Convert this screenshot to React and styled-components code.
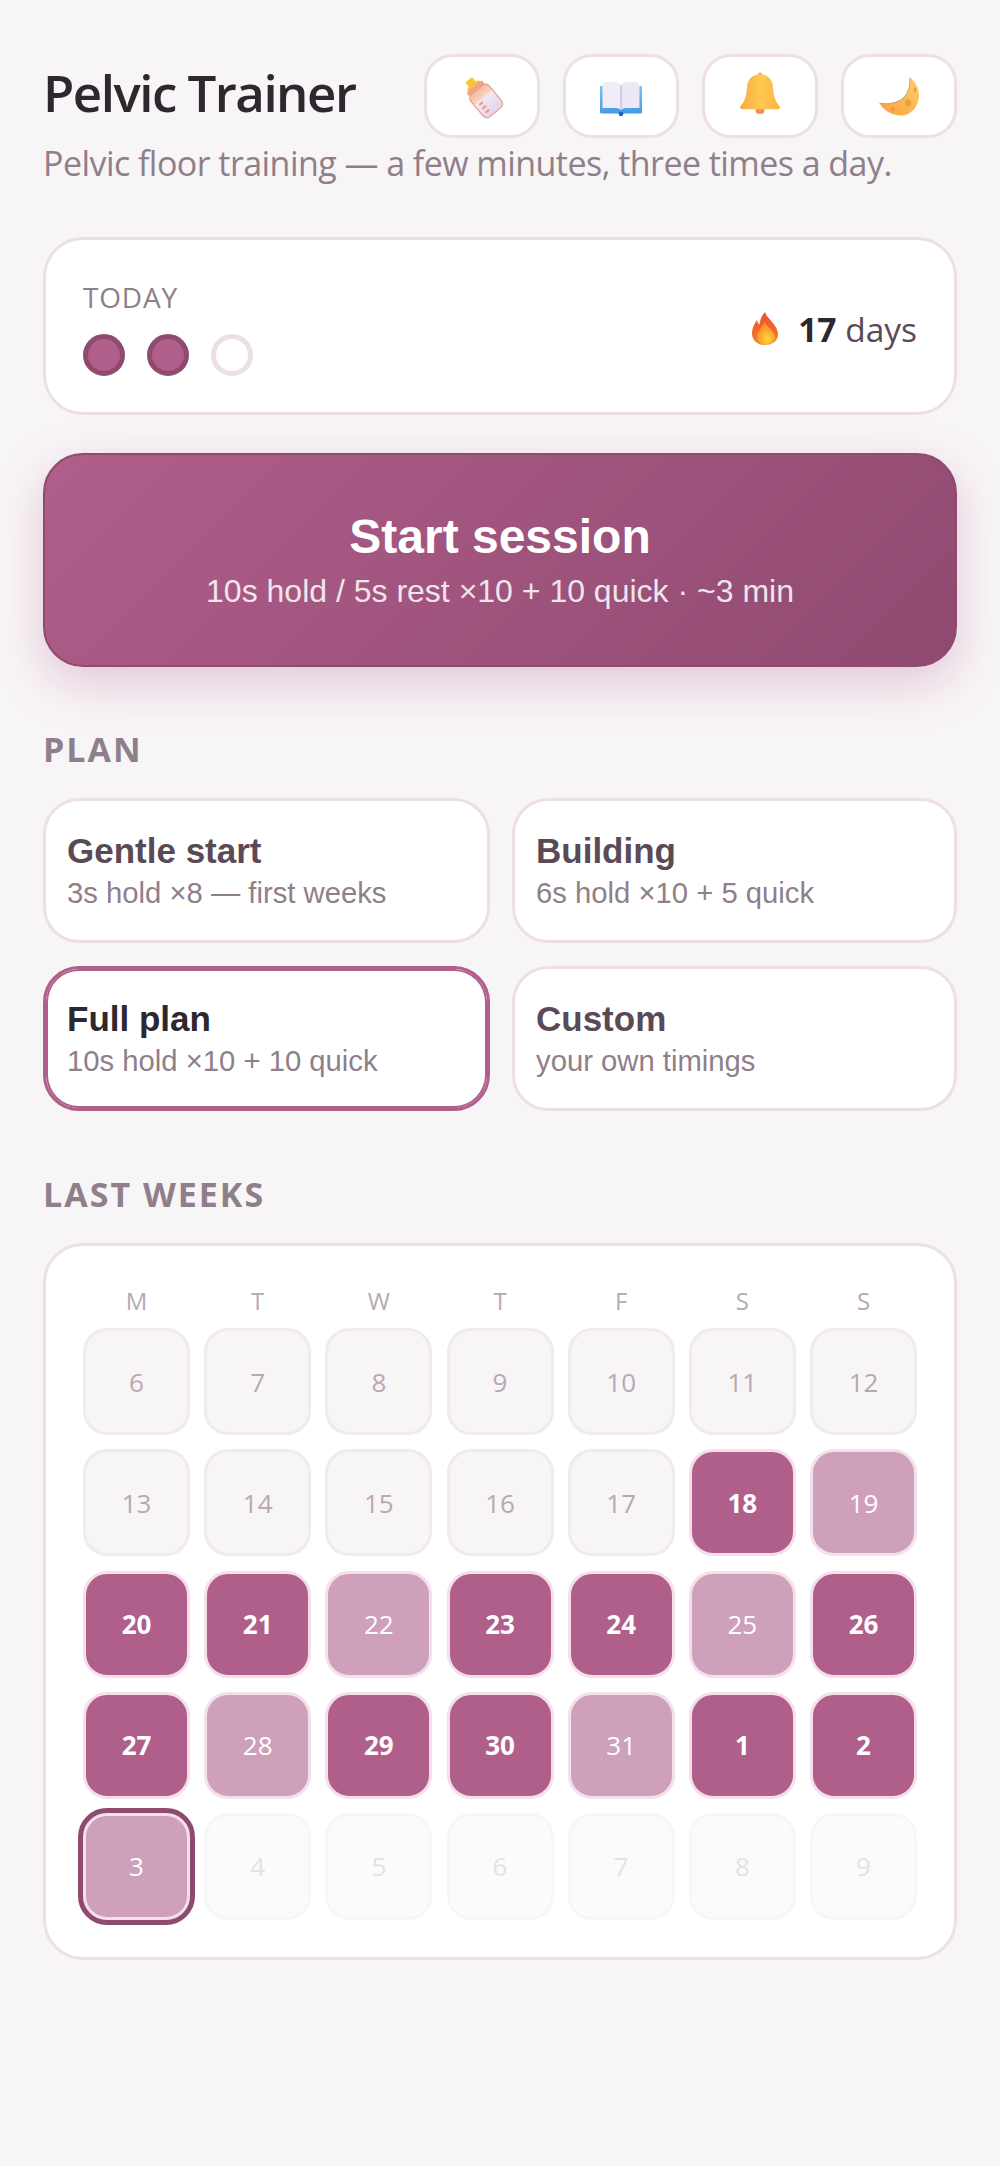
import styled, { createGlobalStyle } from "styled-components";

const GlobalStyle = createGlobalStyle`
  html, body {
    margin: 0;
    padding: 0;
    background: #f8f5f7;
  }
  * {
    box-sizing: border-box;
  }
`;

const Page = styled.div`
  width: 1000px;
  min-height: 2166px;
  padding: 54px 43px 0;
  background: #f8f5f7;
  font-family: "Open Sans", "Noto Sans", sans-serif;
  color: #2d2730;
`;

const Header = styled.header`
  display: flex;
  align-items: center;
  justify-content: space-between;
`;

const Title = styled.h1`
  margin: 0 0 8px 0;
  font-size: 51px;
  line-height: 76px;
  font-weight: 600;
  letter-spacing: -1.5px;
  color: #2d2730;
`;

const IconRow = styled.div`
  display: flex;
  gap: 23px;
`;

const IconButton = styled.button`
  width: 116px;
  height: 84px;
  padding: 0;
  display: flex;
  align-items: center;
  justify-content: center;
  background: #fff;
  border: 3px solid #ecdfe7;
  border-radius: 29px;
`;

const Subtitle = styled.p`
  margin: 0;
  font-size: 34px;
  line-height: 50px;
  color: #8f7f8a;
  white-space: nowrap;
  letter-spacing: -0.55px;
`;

const TodayCard = styled.section`
  margin-top: 49px;
  height: 178px;
  padding: 0 37px;
  display: flex;
  align-items: center;
  justify-content: space-between;
  background: #fff;
  border: 3px solid #ecdfe7;
  border-radius: 40px;
`;

const TodayBlock = styled.div`
  padding-top: 2px;
`;

const TodayLabel = styled.div`
  font-size: 28px;
  line-height: 38px;
  letter-spacing: 0.8px;
  color: #8f7f8a;
`;

const Dots = styled.div`
  margin-top: 18px;
  display: flex;
  gap: 22px;
`;

const Dot = styled.span`
  width: 42px;
  height: 42px;
  border-radius: 50%;
  border: 5px solid ${(p) => (p.$done ? "#8f4a70" : "#ecdfe7")};
  background: ${(p) => (p.$done ? "#b05e8a" : "#fff")};
`;

const Streak = styled.div`
  display: flex;
  align-items: center;
  gap: 20px;
  padding-top: 5px;
  font-size: 33.5px;
  line-height: 48px;
  color: #5a4a55;
`;

const StreakText = styled.span`
  b {
    font-weight: 700;
    color: #2d2730;
  }
`;

const StartButton = styled.button`
  display: block;
  width: 100%;
  height: 214px;
  margin-top: 38px;
  padding: 0 0 2px;
  border: 2px solid #8f4a70;
  border-radius: 40px;
  background: linear-gradient(135deg, #b05e8a, #8f4a70);
  box-shadow: 0 16px 48px rgba(176, 94, 138, 0.3);
  font-family: "Liberation Sans", Arial, sans-serif;
  color: #fff;
  text-align: center;
`;

const StartTitle = styled.div`
  font-size: 48px;
  line-height: 58px;
  font-weight: 700;
`;

const StartSub = styled.div`
  margin-top: 5px;
  font-size: 32px;
  line-height: 40px;
  opacity: 0.85;
`;

const SectionLabel = styled.h2`
  margin: ${(p) => p.$top}px 0 0;
  font-size: 34px;
  line-height: 46px;
  font-weight: 700;
  letter-spacing: 2px;
  color: #8f7f8a;
`;

const PlanGrid = styled.div`
  margin-top: 26px;
  display: grid;
  grid-template-columns: 447px 445px;
  gap: 23px 22px;
`;

const PlanCard = styled.div`
  height: 145px;
  padding: 0 21px;
  display: flex;
  flex-direction: column;
  justify-content: center;
  background: #fff;
  border: 3px solid ${(p) => (p.$active ? "#b05e8a" : "#ecdfe7")};
  border-radius: 36px;
  box-shadow: ${(p) => (p.$active ? "inset 0 0 0 2px #b05e8a" : "none")};
  font-family: "Liberation Sans", Arial, sans-serif;
`;

const PlanTitle = styled.div`
  font-size: 35px;
  line-height: 44px;
  font-weight: 700;
  color: ${(p) => (p.$active ? "#2d2730" : "#5a4a55")};
`;

const PlanSub = styled.div`
  margin-top: 1px;
  font-size: 29.25px;
  line-height: 38px;
  color: #8f7f8a;
`;

const CalendarCard = styled.section`
  margin-top: 26px;
  padding: 36px 37px 37px;
  background: #fff;
  border: 3px solid #ecdfe7;
  border-radius: 40px;
`;

const CalendarGrid = styled.div`
  display: grid;
  grid-template-columns: repeat(7, 1fr);
  gap: 14.2px;
`;

const WeekDay = styled.div`
  height: 32px;
  padding-top: 3px;
  font-size: 24px;
  line-height: 32px;
  text-align: center;
  color: #b8a8b2;
`;

const cellBg = { none: "#f8f5f7", full: "#b05e8a", part: "#cfa0b9", future: "#fcfbfc" };
const cellColor = { none: "#b8a8b2", full: "#fff", part: "#fff", future: "#e6e1e4" };
const cellBorder = { none: "#f1eaee", full: "#f4dfec", part: "#f4dfec", future: "#f9f6f8" };

const Cell = styled.div`
  aspect-ratio: 1;
  display: flex;
  align-items: center;
  justify-content: center;
  background: ${(p) => cellBg[p.$kind]};
  border: 3px solid ${(p) => cellBorder[p.$kind]};
  border-radius: 24px;
  font-size: 26px;
  font-weight: ${(p) => (p.$kind === "full" ? 700 : 400)};
  color: ${(p) => cellColor[p.$kind]};
  outline: ${(p) => (p.$today ? "5px solid #8f4a70" : "none")};
`;

const BottleIcon = () => (
  <svg width="44" height="46" viewBox="0 0 44 46">
    <defs>
      <linearGradient id="bottleTop" x1="0" y1="0" x2="0" y2="1">
        <stop offset="0" stopColor="#f6b9a0" />
        <stop offset="1" stopColor="#f9d8c8" />
      </linearGradient>
      <linearGradient id="bottleLow" x1="0" y1="0" x2="0" y2="1">
        <stop offset="0" stopColor="#f3e9f5" />
        <stop offset="1" stopColor="#e2d3ea" />
      </linearGradient>
    </defs>
    <g transform="rotate(-40 22 23)">
      <path d="M19 2c-.6 0-1 .5-1 1l-.4 4.500c-2.200.5-3.600 1.600-3.600 3.500h16c0-1.900-1.400-3-3.600-3.500L26.500 3c0-.5-.4-1-1-1z" fill="#f5c53c" />
      <rect x="12" y="10.500" width="20" height="5" rx="2" fill="#f2a488" />
      <path d="M10 20a5 5 0 0 1 5-5h14a5 5 0 0 1 5 5v6H10z" fill="url(#bottleTop)" />
      <path d="M10 25h24v14a5 5 0 0 1-5 5H15a5 5 0 0 1-5-5z" fill="url(#bottleLow)" />
      <path d="M10 20a5 5 0 0 1 5-5h14a5 5 0 0 1 5 5v19a5 5 0 0 1-5 5H15a5 5 0 0 1-5-5z" fill="none" stroke="#ef9c8a" strokeWidth="1.200" />
      <g fill="#ee9a80">
        <rect x="14" y="27" width="5" height="2.200" rx="1.100" />
        <rect x="14" y="32" width="5" height="2.200" rx="1.100" />
        <rect x="14" y="37" width="5" height="2.200" rx="1.100" />
      </g>
    </g>
  </svg>
);

const BookIcon = () => (
  <svg width="44" height="42" viewBox="0 -6 44 42">
    <defs>
      <linearGradient id="bookCover" x1="0" y1="0" x2="0" y2="1">
        <stop offset="0" stopColor="#7cc4ec" />
        <stop offset="1" stopColor="#3f97e8" />
      </linearGradient>
    </defs>
    <path d="M1 5h42v26a1.500 1.500 0 0 1-1.500 1.500H26c-1 0-2 .5-2.500 1.500h-3c-.5-1-1.500-1.500-2.500-1.500H2.500A1.500 1.500 0 0 1 1 31z" fill="url(#bookCover)" />
    <circle cx="22" cy="33" r="2.200" fill="#1c62c4" />
    <path d="M3.500 3.500C4 2 6 1 9 1h7c3 0 5 1.500 5.500 3.500v24c-1-1-3-1.500-5.500-1.500H3.500z" fill="#f1edf8" />
    <path d="M40.500 3.500C40 2 38 1 35 1h-7c-3 0-5 1.500-5.500 3.500v24c1-1 3-1.500 5.500-1.500h12.500z" fill="#ede8f6" />
    <path d="M22 4v25" stroke="#d6cbe6" strokeWidth="2" />
  </svg>
);

const BellIcon = () => (
  <svg width="42" height="48" viewBox="0 0 42 48">
    <defs>
      <linearGradient id="bellBody" x1="0" y1="0" x2="1" y2="0">
        <stop offset="0" stopColor="#f9ac3e" />
        <stop offset="0.55" stopColor="#ffc952" />
        <stop offset="1" stopColor="#fbb240" />
      </linearGradient>
    </defs>
    <ellipse cx="21" cy="38.500" rx="4.500" ry="3.500" fill="#f28f5a" />
    <circle cx="21" cy="2.800" r="2.400" fill="#f9b644" />
    <path d="M21 2.500c-8 0-12.500 5-13 13-.4 7-1.500 13-6 18-1 1.500-1.500 3 .5 3.500.5.200 1 .2 1.500.2h34c.5 0 1 0 1.500-.2 2-.5 1.500-2 .5-3.500-4.500-5-5.600-11-6-18-.5-8-5-13-13-13z" fill="url(#bellBody)" />
  </svg>
);

const MoonIcon = () => (
  <svg width="41" height="39" viewBox="0 0 41 39">
    <defs>
      <linearGradient id="moonBody" x1="0" y1="1" x2="1" y2="0">
        <stop offset="0" stopColor="#f7a03f" />
        <stop offset="1" stopColor="#ffd06a" />
      </linearGradient>
    </defs>
    <path d="M30.700.7C31.500 9 29 17 23.300 21.700 17 26.500 8 27.500.5 26 4 33 13 38.500 22 38.500c11 0 18.500-10.500 18-21.500C39.500 10 36 4 30.700.7z" fill="url(#moonBody)" />
    <path d="M30.700.7C31.500 9 29 17 23.300 21.700 17 26.500 8 27.500.5 26" fill="none" stroke="#b98a4a" strokeWidth="0.700" />
    <g fill="#e8943c" opacity="0.75">
      <ellipse cx="29" cy="26" rx="3" ry="3.600" />
      <ellipse cx="14" cy="32" rx="2.400" ry="2" />
      <ellipse cx="36" cy="13" rx="1.400" ry="2.400" />
    </g>
  </svg>
);

const FlameIcon = () => (
  <svg width="26" height="33" viewBox="0 0 26 33">
    <defs>
      <linearGradient id="flameOuter" x1="0" y1="0" x2="0" y2="1">
        <stop offset="0" stopColor="#ee4f2e" />
        <stop offset="1" stopColor="#f67c2a" />
      </linearGradient>
      <radialGradient id="flameInner" cx="0.55" cy="0.72" r="0.62">
        <stop offset="0" stopColor="#ffd83c" />
        <stop offset="1" stopColor="#fb8a22" />
      </radialGradient>
    </defs>
    <path d="M13 0c1 4 4 6 7 10 3.500 4 6 8 6 12 0 7-6 11-13 11S0 28.500 0 21.500C0 16 2.500 12 5 8c.5 2 1 3.500 2.500 4.500C8 8 10 3 13 0z" fill="url(#flameOuter)" />
    <path d="M14 33c-5.500 0-9-3.500-9-8.500 0-5 4.500-9 7.500-14.500 2 4 8.500 8.500 10.500 13 1.500 5.500-3 10-9 10z" fill="url(#flameInner)" />
  </svg>
);

const weeks = [
  [["6"], ["7"], ["8"], ["9"], ["10"], ["11"], ["12"]],
  [["13"], ["14"], ["15"], ["16"], ["17"], ["18", "full"], ["19", "part"]],
  [["20", "full"], ["21", "full"], ["22", "part"], ["23", "full"], ["24", "full"], ["25", "part"], ["26", "full"]],
  [["27", "full"], ["28", "part"], ["29", "full"], ["30", "full"], ["31", "part"], ["1", "full"], ["2", "full"]],
  [["3", "part", true], ["4", "future"], ["5", "future"], ["6", "future"], ["7", "future"], ["8", "future"], ["9", "future"]],
];

const plans = [
  { name: "Gentle start", info: "3s hold ×8 — first weeks" },
  { name: "Building", info: "6s hold ×10 + 5 quick" },
  { name: "Full plan", info: "10s hold ×10 + 10 quick", active: true },
  { name: "Custom", info: "your own timings" },
];

const App = () => {
  return (
    <Page>
      <GlobalStyle />
      <Header>
        <Title>Pelvic Trainer</Title>
        <IconRow>
          <IconButton><BottleIcon /></IconButton>
          <IconButton><BookIcon /></IconButton>
          <IconButton><BellIcon /></IconButton>
          <IconButton><MoonIcon /></IconButton>
        </IconRow>
      </Header>
      <Subtitle>Pelvic floor training — a few minutes, three times a day.</Subtitle>

      <TodayCard>
        <TodayBlock>
          <TodayLabel>TODAY</TodayLabel>
          <Dots>
            <Dot $done />
            <Dot $done />
            <Dot />
          </Dots>
        </TodayBlock>
        <Streak>
          <FlameIcon />
          <StreakText><b>17</b> days</StreakText>
        </Streak>
      </TodayCard>

      <StartButton>
        <StartTitle>Start session</StartTitle>
        <StartSub>10s hold / 5s rest ×10 + 10 quick · ~3 min</StartSub>
      </StartButton>

      <SectionLabel $top={59}>PLAN</SectionLabel>
      <PlanGrid>
        {plans.map((plan) => (
          <PlanCard key={plan.name} $active={plan.active}>
            <PlanTitle $active={plan.active}>{plan.name}</PlanTitle>
            <PlanSub>{plan.info}</PlanSub>
          </PlanCard>
        ))}
      </PlanGrid>

      <SectionLabel $top={60}>LAST WEEKS</SectionLabel>
      <CalendarCard>
        <CalendarGrid>
          {["M", "T", "W", "T", "F", "S", "S"].map((d, i) => (
            <WeekDay key={i}>{d}</WeekDay>
          ))}
          {weeks.flat().map(([day, kind = "none", today], i) => (
            <Cell key={i} $kind={kind} $today={today}>{day}</Cell>
          ))}
        </CalendarGrid>
      </CalendarCard>
    </Page>
  );
};

export default App;
